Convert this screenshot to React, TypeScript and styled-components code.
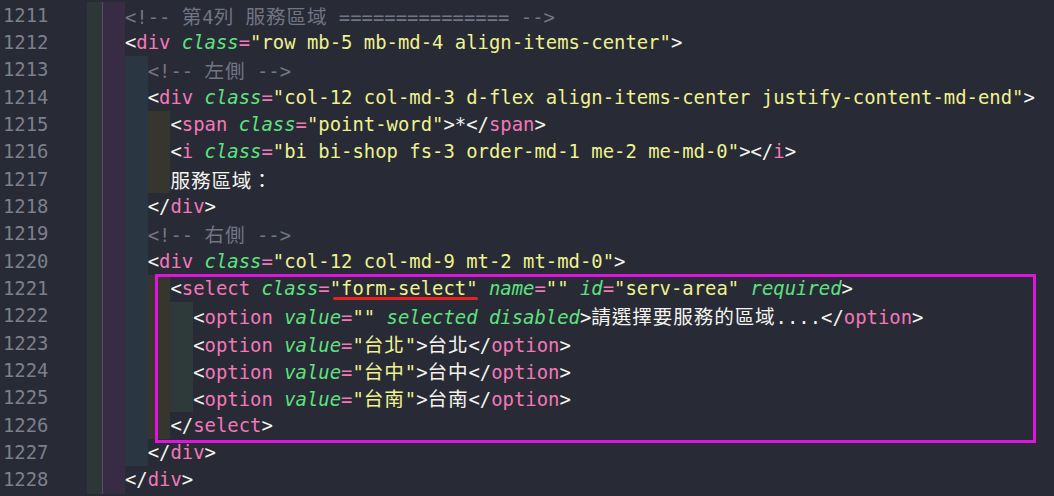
import React from 'react';
import styled, { createGlobalStyle, css } from 'styled-components';

const Global = createGlobalStyle`
  html, body { margin: 0; padding: 0; background: #282a36; height: 100%; overflow: hidden; }
  #root { height: 100%; }
`;

const bandColors = ['#2e3638', '#372c43', '#2b3643', '#36362f', '#2e3a3a'];

const Editor = styled.div`
  position: relative;
  height: 496px;
  box-sizing: border-box;
  padding-top: 1.5px;
  background: #282a36;
  font-family: "DejaVu Sans Mono", "Liberation Mono", monospace;
  font-size: 18.9px;
  overflow: hidden;
`;

const Row = styled.div`
  display: flex;
  height: 27.35px;
  line-height: 27.35px;
  white-space: pre;
`;

const Gutter = styled.div`
  flex: none;
  width: 87px;
  box-sizing: border-box;
  padding-left: 3px;
  color: #7b808b;
`;

const Guide = styled.div<{ $level: number }>`
  flex: none;
  width: ${(p) => (p.$level === 0 ? 15.2 : 22.76)}px;
  background: ${(p) => bandColors[p.$level]};
  ${(p) =>
    p.$level === 1 &&
    css`
      box-shadow: inset 1px 0 #50525f;
    `}
`;

const Code = styled.div`
  flex: none;
  white-space: pre;
`;

const kindColor: Record<string, string> = {
  p: '#f4f4ee',
  t: '#f278b8',
  a: '#5ee27f',
  e: '#f278b8',
  s: '#eef38f',
  x: '#f4f4ee',
  c: '#717584',
};

const Tok = styled.span<{ $kind: string }>`
  color: ${(p) => kindColor[p.$kind]};
  font-style: ${(p) => (p.$kind === 'a' ? 'italic' : 'normal')};
`;

const Cjk = styled.span`
  font-family: "Noto Sans CJK TC", "Noto Sans CJK SC", sans-serif;
  font-size: 19.6px;
  letter-spacing: 0.88px;
`;

const HighlightBox = styled.div`
  position: absolute;
  left: 155px;
  top: 274px;
  width: 881px;
  height: 169px;
  box-sizing: border-box;
  border: 3px solid #e014e0;
  pointer-events: none;
`;

const Underline = styled.div`
  position: absolute;
  left: 333px;
  top: 297px;
  width: 145px;
  height: 3px;
  border-radius: 2px;
  background: #e8231f;
`;

type T = [string, string];

function tokenize(src: string): T[] {
  if (src.startsWith('<!--')) return [['c', src]];
  const out: T[] = [];
  let i = 0;
  while (i < src.length) {
    if (src[i] === '<') {
      let j = i + 1;
      if (src[j] === '/') j++;
      out.push(['p', src.slice(i, j)]);
      let k = j;
      while (k < src.length && /[a-z]/.test(src[k])) k++;
      out.push(['t', src.slice(j, k)]);
      i = k;
      while (i < src.length && src[i] !== '>') {
        const ch = src[i];
        if (ch === ' ') {
          out.push(['x', ' ']);
          i++;
          continue;
        }
        if (ch === '=') {
          out.push(['e', '=']);
          i++;
          continue;
        }
        if (ch === '"') {
          const e = src.indexOf('"', i + 1);
          out.push(['s', src.slice(i, e + 1)]);
          i = e + 1;
          continue;
        }
        let k2 = i;
        while (k2 < src.length && /[a-z-]/.test(src[k2])) k2++;
        if (k2 === i) {
          out.push(['x', ch]);
          i++;
        } else {
          out.push(['a', src.slice(i, k2)]);
          i = k2;
        }
      }
      if (i < src.length) {
        out.push(['p', '>']);
        i++;
      }
    } else {
      const e = src.indexOf('<', i);
      const end = e === -1 ? src.length : e;
      out.push(['x', src.slice(i, end)]);
      i = end;
    }
  }
  return out;
}

function renderText(text: string) {
  const parts = text.split(/([\u3000-\u9fff\uff00-\uffef]+)/);
  return parts.map((part, idx) =>
    /[\u3000-\u9fff\uff00-\uffef]/.test(part) ? <Cjk key={idx}>{part}</Cjk> : part
  );
}

const lines: [number, number, string][] = [
  [1211, 2, '<!-- 第4列 服務區域 =============== -->'],
  [1212, 2, '<div class="row mb-5 mb-md-4 align-items-center">'],
  [1213, 3, '<!-- 左側 -->'],
  [1214, 3, '<div class="col-12 col-md-3 d-flex align-items-center justify-content-md-end">'],
  [1215, 4, '<span class="point-word">*</span>'],
  [1216, 4, '<i class="bi bi-shop fs-3 order-md-1 me-2 me-md-0"></i>'],
  [1217, 4, '服務區域：'],
  [1218, 3, '</div>'],
  [1219, 3, '<!-- 右側 -->'],
  [1220, 3, '<div class="col-12 col-md-9 mt-2 mt-md-0">'],
  [1221, 4, '<select class="form-select" name="" id="serv-area" required>'],
  [1222, 5, '<option value="" selected disabled>請選擇要服務的區域....</option>'],
  [1223, 5, '<option value="台北">台北</option>'],
  [1224, 5, '<option value="台中">台中</option>'],
  [1225, 5, '<option value="台南">台南</option>'],
  [1226, 4, '</select>'],
  [1227, 3, '</div>'],
  [1228, 2, '</div>'],
];

export default function App() {
  return (
    <>
      <Global />
      <Editor>
        {lines.map(([num, depth, src]) => (
          <Row key={num}>
            <Gutter>{num}</Gutter>
            {Array.from({ length: depth }, (_, l) => (
              <Guide key={l} $level={l} />
            ))}
            <Code>
              {tokenize(src).map(([kind, text], idx) => (
                <Tok key={idx} $kind={kind}>
                  {renderText(text)}
                </Tok>
              ))}
            </Code>
          </Row>
        ))}
        <HighlightBox />
        <Underline />
      </Editor>
    </>
  );
}
